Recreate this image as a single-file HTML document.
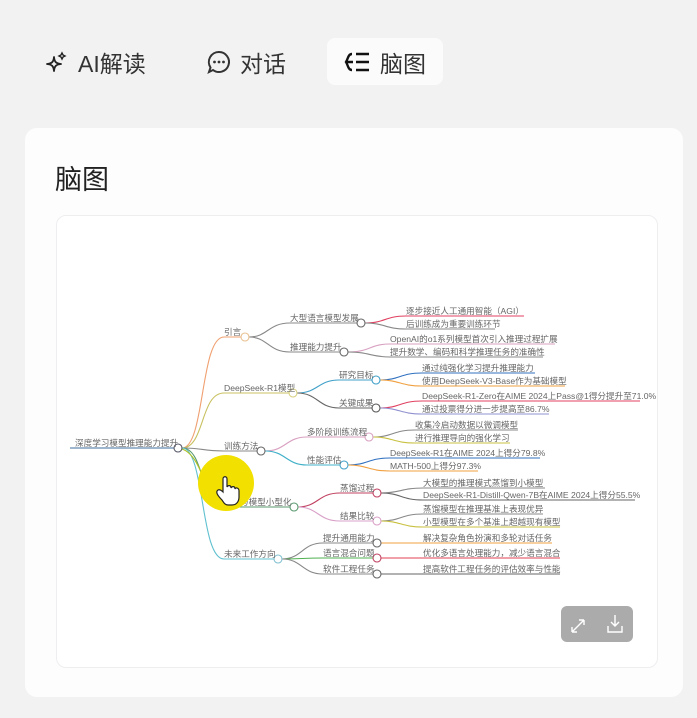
<!DOCTYPE html>
<html><head><meta charset="utf-8"><style>
html,body{margin:0;padding:0;}
body{width:697px;height:718px;background:#f2f2f3;position:relative;overflow:hidden;font-family:"Liberation Sans","Noto Sans CJK SC",sans-serif;}
.tab{position:absolute;top:38px;height:47px;display:flex;align-items:center;font-size:23px;color:#333;}
.active{background:#fbfbfc;border-radius:8px;}
.card{position:absolute;left:25px;top:128px;width:658px;height:569px;background:#fdfdfe;border-radius:12px;}
.title{position:absolute;left:55px;top:158px;font-size:27px;color:#222;font-family:"Noto Sans CJK SC",sans-serif;}
.inner{position:absolute;left:56px;top:215px;width:600px;height:451px;background:#fff;border:1px solid #eeeef0;border-radius:10px;}
.btn{position:absolute;left:561px;top:606px;width:72px;height:36px;background:#ababab;border-radius:6px;}
svg text{font-family:"Liberation Sans Narrow","Liberation Sans","Noto Sans CJK SC",sans-serif;font-size:8.6px;fill:#666;}
</style></head><body>
<div class="tab" style="left:44px;">
<svg width="24" height="24" viewBox="0 0 24 24" style="margin-right:10px"><path d="M10 7 C10.5 12 12 13.5 17 14 C12 14.5 10.5 16 10 21 C9.5 16 8 14.5 3 14 C8 13.5 9.5 12 10 7Z" fill="none" stroke="#222" stroke-width="1.8" stroke-linejoin="round"/><path d="M18 3 L19 5 L21 6 L19 7 L18 9 L17 7 L15 6 L17 5Z" fill="none" stroke="#222" stroke-width="1.4"/></svg>AI解读</div>
<div class="tab" style="left:206px;">
<svg width="26" height="26" viewBox="0 0 26 26" style="margin-right:8px"><path d="M13 3 A10 10 0 1 1 7 21 L3 23 L4.5 18.5 A10 10 0 0 1 13 3Z" fill="none" stroke="#333" stroke-width="2"/><circle cx="8.5" cy="13" r="1.4" fill="#333"/><circle cx="13" cy="13" r="1.4" fill="#333"/><circle cx="17.5" cy="13" r="1.4" fill="#333"/></svg>对话</div>
<div class="tab active" style="left:327px;width:116px;padding-left:17px;box-sizing:border-box;">
<svg width="28" height="24" viewBox="0 0 28 24" style="margin-right:8px"><path d="M8 4 C4 4 4 9 2 12 C4 15 4 20 8 20 M2 12 H9 M12 4 H25 M12 12 H25 M12 20 H25" fill="none" stroke="#111" stroke-width="2.4"/></svg>脑图</div>
<div class="card"></div>
<div class="title">脑图</div>
<div class="inner"></div>
<svg width="697" height="718" style="position:absolute;left:0;top:0" fill="none">
<g stroke-width="1.1">
<path d="M70 448 H174" stroke="#3d6f9e"/>
<path d="M182 448 C205 448 200 337 224 337 H241" stroke="#f0a070"/>
<path d="M182 448 C205 448 200 393 224 393 H289" stroke="#c8c060"/>
<path d="M182 448 C205 448 200 451 224 451 H257" stroke="#888"/>
<path d="M182 448 C205 448 200 507 224 507 H290" stroke="#5a9a70"/>
<path d="M182 448 C205 448 200 559 224 559 H274" stroke="#60c0d0"/>
<path d="M182 449 C200 455 205 490 215 500" stroke="#b0c020"/>
<path d="M249 337 C268 337 268 323 290 323 H357" stroke="#888"/>
<path d="M249 337 C268 337 268 352 290 352 H340" stroke="#888"/>
<path d="M297 393 C318 393 318 380 339 380 H372" stroke="#40a0c8"/>
<path d="M297 393 C318 393 318 408 339 408 H372" stroke="#666"/>
<path d="M265 451 C286 451 286 437 307 437 H365" stroke="#d8a0c0"/>
<path d="M265 451 C286 451 286 465 307 465 H340" stroke="#40b0c8"/>
<path d="M298 507 C318 507 318 493 340 493 H373" stroke="#c04060"/>
<path d="M298 507 C318 507 318 521 340 521 H373" stroke="#d8a0c8"/>
<path d="M282 559 C302 559 302 543 323 543 H373" stroke="#888"/>
<path d="M282 559 C302 559 302 558 323 558 H373" stroke="#50b050"/>
<path d="M282 559 C302 559 302 574 323 574 H373" stroke="#888"/>
<path d="M365 323 C385 323 385 316 406 316 H524" stroke="#e04060"/>
<path d="M365 323 C385 323 385 329 406 329 H495" stroke="#888"/>
<path d="M348 352 C370 352 370 344 390 344 H555" stroke="#d8a0c0"/>
<path d="M348 352 C370 352 370 357 390 357 H543" stroke="#888"/>
<path d="M380 380 C400 380 400 373 422 373 H535" stroke="#3070c0"/>
<path d="M380 380 C400 380 400 386 422 386 H565" stroke="#f0a040"/>
<path d="M380 408 C400 408 400 401 422 401 H640" stroke="#e04060"/>
<path d="M380 408 C400 408 400 414 422 414 H549" stroke="#9090d0"/>
<path d="M373 437 C393 437 393 430 415 430 H518" stroke="#888"/>
<path d="M373 437 C393 437 393 443 415 443 H510" stroke="#c8c040"/>
<path d="M348 465 C368 465 368 458 390 458 H540" stroke="#3070c0"/>
<path d="M348 465 C368 465 368 471 390 471 H478" stroke="#f0a040"/>
<path d="M381 493 C401 493 401 488 423 488 H545" stroke="#888"/>
<path d="M381 493 C401 493 401 500 423 500 H635" stroke="#666"/>
<path d="M381 521 C401 521 401 514 423 514 H543" stroke="#888"/>
<path d="M381 521 C401 521 401 527 423 527 H560" stroke="#c8c040"/>
<path d="M381 543 H552" stroke="#f0a040"/>
<path d="M381 558 H560" stroke="#e04050"/>
<path d="M381 574 H560" stroke="#666"/>
</g>
<g stroke-width="1.1" fill="#fff">
<circle cx="178" cy="448" r="4" stroke="#556"/>
<circle cx="245" cy="337" r="4" stroke="#e8c090"/>
<circle cx="293" cy="393" r="4" stroke="#d8d080"/>
<circle cx="261" cy="451" r="4" stroke="#666"/>
<circle cx="294" cy="507" r="4" stroke="#5a9a70"/>
<circle cx="278" cy="559" r="4" stroke="#80c0d0"/>
<circle cx="361" cy="323" r="4" stroke="#666"/>
<circle cx="344" cy="352" r="4" stroke="#666"/>
<circle cx="376" cy="380" r="4" stroke="#40a0c8"/>
<circle cx="376" cy="408" r="4" stroke="#555"/>
<circle cx="369" cy="437" r="4" stroke="#d8a0c0"/>
<circle cx="344" cy="465" r="4" stroke="#40a0c8"/>
<circle cx="377" cy="493" r="4" stroke="#c04060"/>
<circle cx="377" cy="521" r="4" stroke="#d8a0c8"/>
<circle cx="377" cy="543" r="4" stroke="#666"/>
<circle cx="377" cy="558" r="4" stroke="#c04060"/>
<circle cx="377" cy="574" r="4" stroke="#666"/>
</g>
<text x="75" y="446">深度学习模型推理能力提升</text>
<text x="224" y="335">引言</text>
<text x="224" y="391">DeepSeek-R1模型</text>
<text x="224" y="449">训练方法</text>
<text x="240" y="505">与模型小型化</text>
<text x="224" y="557">未来工作方向</text>
<text x="290" y="321">大型语言模型发展</text>
<text x="290" y="350">推理能力提升</text>
<text x="339" y="378">研究目标</text>
<text x="339" y="406">关键成果</text>
<text x="307" y="435">多阶段训练流程</text>
<text x="307" y="463">性能评估</text>
<text x="340" y="491">蒸馏过程</text>
<text x="340" y="519">结果比较</text>
<text x="323" y="541">提升通用能力</text>
<text x="323" y="556">语言混合问题</text>
<text x="323" y="572">软件工程任务</text>
<text x="406" y="314">逐步接近人工通用智能（AGI）</text>
<text x="406" y="327">后训练成为重要训练环节</text>
<text x="390" y="342">OpenAI的o1系列模型首次引入推理过程扩展</text>
<text x="390" y="355">提升数学、编码和科学推理任务的准确性</text>
<text x="422" y="371">通过纯强化学习提升推理能力</text>
<text x="422" y="384">使用DeepSeek-V3-Base作为基础模型</text>
<text x="422" y="399">DeepSeek-R1-Zero在AIME 2024上Pass@1得分提升至71.0%</text>
<text x="422" y="412">通过投票得分进一步提高至86.7%</text>
<text x="415" y="428">收集冷启动数据以微调模型</text>
<text x="415" y="441">进行推理导向的强化学习</text>
<text x="390" y="456">DeepSeek-R1在AIME 2024上得分79.8%</text>
<text x="390" y="469">MATH-500上得分97.3%</text>
<text x="423" y="486">大模型的推理模式蒸馏到小模型</text>
<text x="423" y="498">DeepSeek-R1-Distill-Qwen-7B在AIME 2024上得分55.5%</text>
<text x="423" y="512">蒸馏模型在推理基准上表现优异</text>
<text x="423" y="525">小型模型在多个基准上超越现有模型</text>
<text x="423" y="541">解决复杂角色扮演和多轮对话任务</text>
<text x="423" y="556">优化多语言处理能力，减少语言混合</text>
<text x="423" y="572">提高软件工程任务的评估效率与性能</text>
<circle cx="226" cy="483" r="28" fill="#f2e000"/>
<path d="M222 500 C218 496 215 492 218 490 C220 489 222 491 223 492 L223 479 C223 476 227 476 227 479 L227 487 C228 485 231 485 231 488 C232 486 235 486 235 489 C236 487 239 488 239 491 L239 497 C239 502 236 505 232 505 L228 505 C225 505 224 503 222 500Z" fill="#fff" stroke="#222" stroke-width="1.2"/>
</svg>
<div class="btn"><svg width="72" height="36" viewBox="0 0 72 36" fill="none" stroke="#fff" stroke-width="1.4"><path d="M11 26 L23 14 M11 26 V21 M11 26 H16 M23 14 H18 M23 14 V19"/><path d="M54 9 V20 M50 16 L54 20 L58 16 M47 20 V26 H61 V20"/></svg></div>
</body></html>
